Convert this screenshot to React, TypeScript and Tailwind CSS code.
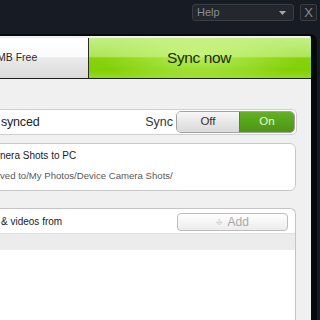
export default function App() {
  return (
    <div className="w-[320px] h-[320px] overflow-hidden bg-[#161b24] font-['Liberation_Sans',Arial,sans-serif] flex flex-col">
      {/* Title bar */}
      <div className="h-[34px] shrink-0 flex justify-end items-start pt-[4px] pr-[3px] gap-[6px]">
        <div className="w-[102px] h-[17px] rounded-[3px] border border-[#383c43] bg-[#24282e] flex items-center justify-between pl-[4px] pr-[7px]">
          <span className="text-[11px] leading-none text-[#878b91]">Help</span>
          <svg width="7" height="4" viewBox="0 0 7 4">
            <path d="M0 0h7L3.5 4z" fill="#a3a7ac" />
          </svg>
        </div>
        <div className="w-[17px] h-[17px] rounded-[2px] border border-[#383c43] bg-[#1f2329] flex items-center justify-center text-[13px] leading-none text-[#858a90]">
          X
        </div>
      </div>

      {/* Main panel */}
      <div className="flex-1 flex min-h-0">
        <div className="flex-1 mr-[3px] border-t-2 border-r-[6px] border-[#08090b] rounded-tr-[7px] bg-[#f0f0f0] pt-[2px] flex flex-col overflow-hidden">
          {/* Top row */}
          <div className="h-[41px] shrink-0 flex border-b border-[#1d1f1c]">
            <div className="w-[89px] shrink-0 border-r border-[#2a2a2a] overflow-hidden flex items-center bg-[linear-gradient(to_bottom,#ffffff_0%,#fbfbfb_46%,#eaeaea_50%,#dadada_100%)]">
              <span className="ml-[-3px] whitespace-nowrap text-[10.5px] text-[#2a2a2a]">MB Free</span>
            </div>
            <div className="flex-1 flex items-center justify-center bg-[radial-gradient(ellipse_45%_70%_at_50%_50%,rgba(220,255,150,0.55),rgba(220,255,150,0)_100%),linear-gradient(to_bottom,#c4ef84_0%,#aee65a_46%,#86d20e_50%,#82d006_80%,#93da22_100%)]">
              <span className="text-[15.5px] tracking-[-0.4px] text-[#1b2a06] ml-[-2px]">Sync now</span>
            </div>
          </div>

          {/* Sync row */}
          <div className="mt-[30px] h-[26px] shrink-0 ml-[-4px] mr-[14px] bg-white border border-[#cfcfcf] rounded-r-[5px] flex items-center pl-[4px] pr-[1px]">
            <span className="text-[12.5px] tracking-[-0.2px] text-[#222]">synced</span>
            <span className="ml-auto mr-[3px] text-[12.5px] text-[#333]">Sync</span>
            <div className="flex h-[22px] w-[119px] rounded-[5px] overflow-hidden border border-[#a2a2a2]">
              <div className="w-[62px] flex items-center justify-center bg-[linear-gradient(to_bottom,#f6f6f6,#d9d9d9)] text-[11.5px] text-[#333]">
                Off
              </div>
              <div className="flex-1 flex items-center justify-center bg-[linear-gradient(to_bottom,#63b124,#4c9612)] text-[11.5px] text-[#e8f7d8] border-l border-[#4a8a18]">
                On
              </div>
            </div>
          </div>

          {/* Camera shots box */}
          <div className="mt-[8px] h-[48px] shrink-0 ml-[-4px] mr-[15px] bg-white border border-[#c9c9c9] rounded-r-[6px] flex flex-col pl-[3px] pt-[6px]">
            <span className="h-[12px] leading-[12px] text-[10px] whitespace-nowrap text-[#1a1a1a]">nera Shots to PC</span>
            <span className="mt-[8px] h-[12px] leading-[12px] text-[9.6px] whitespace-nowrap text-[#5a5a5a]">ved to/My Photos/Device Camera Shots/</span>
          </div>

          {/* Folders box */}
          <div className="mt-[17px] flex-1 ml-[-4px] mr-[15px] bg-white border-t border-l border-r border-[#c4c4c4] rounded-tr-[6px] flex flex-col">
            <div className="h-[24px] shrink-0 flex items-center justify-between pl-[4px] pr-[7px]">
              <span className="text-[10px] whitespace-nowrap text-[#222] mt-[1px]">&amp; videos from</span>
              <div className="w-[111px] h-[18px] mt-[1px] rounded-[4px] border border-[#bcbcbc] bg-[linear-gradient(to_bottom,#ffffff,#ececec)] flex items-center justify-center gap-[5px]">
                <span className="text-[11px] leading-none text-[#e6e6e6] font-bold [text-shadow:0_1px_0_#c8c8c8]">+</span>
                <span className="text-[12px] leading-none text-[#a9a9a9]">Add</span>
              </div>
            </div>
            <div className="h-[17px] shrink-0 bg-[#ececec] border-t border-[#e0e0e0]" />
            <div className="flex-1 bg-white" />
          </div>
        </div>
      </div>
    </div>
  );
}
